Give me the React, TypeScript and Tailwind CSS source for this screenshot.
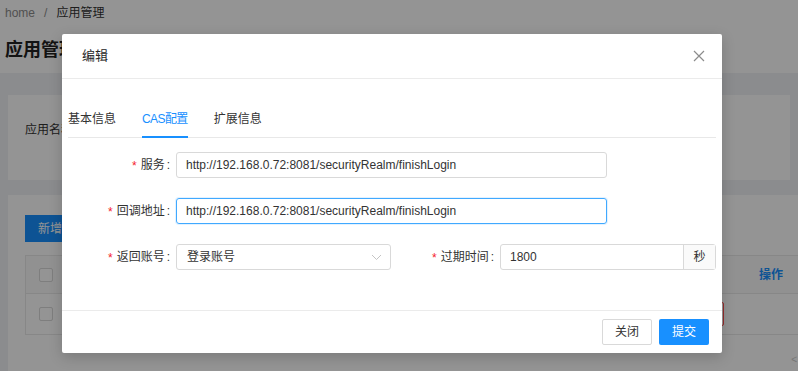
import React from 'react';

const font = "font-['Liberation_Sans','Noto_Sans_CJK_SC',sans-serif]";

const Label: React.FC<{ text: string; width: string }> = ({ text, width }) => (
  <div className={`${width} shrink-0 flex items-center justify-end pr-[6px] text-[12px] text-[#333]`}>
    <span className="text-[#f5222d] text-[12px] leading-none mt-[2px]">*</span>
    <span className="ml-[4px]">{text}</span>
    <span className="ml-[2px]">:</span>
  </div>
);

const CloseIcon = () => (
  <svg width="12" height="12" viewBox="0 0 12 12" fill="none" stroke="#8c8c8c" strokeWidth="1.2">
    <path d="M1 1 L11 11 M11 1 L1 11" />
  </svg>
);

const Chevron = () => (
  <svg width="11" height="7" viewBox="0 0 11 7" fill="none" stroke="#c4c4c4" strokeWidth="1">
    <path d="M1 1 L5.5 5.5 L10 1" />
  </svg>
);

export default function App() {
  const url = 'http://192.168.0.72:8081/securityRealm/finishLogin';

  return (
    <div className={`relative w-[798px] h-[371px] overflow-hidden bg-[#f0f2f5] ${font}`}>
      {/* page behind the mask */}
      <div className="bg-white h-[73px] px-[5px]">
        <div className="h-[25px] flex items-center text-[12px] text-[#8c8c8c]">
          <span>home</span>
          <span className="mx-[9px]">/</span>
          <span className="text-[#333]">应用管理</span>
        </div>
        <div className="mt-[13px] text-[18px] leading-[24px] font-bold text-[#222]">应用管理</div>
      </div>

      <div className="mx-[8px] mt-[22px] h-[85px] bg-white pt-[26px] pl-[17px]">
        <div className="text-[12px] leading-[18px] text-[#333]">应用名称</div>
      </div>

      <div className="ml-[8px] mr-[-30px] mt-[15px] h-[200px] bg-white pt-[20px] px-[17px]">
        <div className="w-[56px] h-[27px] bg-[#1890ff] text-white text-[12px] flex items-center pl-[13px]">新增</div>
        <div className="mt-[13px] border border-[#e8e8e8]">
          <div className="h-[38px] bg-[#fafafa] border-b border-[#e8e8e8] flex items-center">
            <div className="ml-[13px] w-[14px] h-[14px] border border-[#d9d9d9] bg-white rounded-[2px]" />
            <div className="ml-auto mr-[27px] text-[12px] font-bold text-[#1890ff]">操作</div>
          </div>
          <div className="h-[40px] flex items-center">
            <div className="ml-[13px] w-[14px] h-[14px] border border-[#d9d9d9] bg-white rounded-[2px]" />
            <div className="ml-[635px] w-[36px] h-[24px] border border-[#ff4d4f] rounded-[2px]" />
          </div>
        </div>
      </div>

      <div className="absolute right-[1px] top-[352px] text-[10px] text-[#ccc]">&lt;</div>

      {/* mask */}
      <div className="absolute inset-0 bg-black/[0.42]" />

      {/* modal */}
      <div className="absolute left-[62px] top-[34px] w-[660px] h-[319px] bg-white rounded-[2px] shadow-[0_4px_14px_rgba(0,0,0,0.18)] flex flex-col">
        <div className="h-[45px] shrink-0 border-b border-[#ebebeb] flex items-center justify-between pl-[20px] pr-[17px]">
          <span className="text-[13px] text-[#262626]">编辑</span>
          <CloseIcon />
        </div>

        <div className="mx-[6px] h-[59px] shrink-0 border-b border-[#e8e8e8] flex items-end gap-[26px] text-[12px]">
          <div className="leading-[18px] pb-[8px] text-[#333] -mb-px border-b-2 border-transparent">基本信息</div>
          <div className="leading-[18px] pb-[8px] text-[#1890ff] -mb-px border-b-2 border-[#1890ff] tracking-[-0.6px]">CAS配置</div>
          <div className="leading-[18px] pb-[8px] text-[#333] -mb-px border-b-2 border-transparent">扩展信息</div>
        </div>

        <div className="mt-[14px] flex flex-col gap-[20px] text-[12px] text-[#333]">
          <div className="flex h-[26px]">
            <Label text="服务" width="w-[114px]" />
            <div className="w-[431px] border border-[#d9d9d9] rounded-[3px] flex items-center pl-[9px]">{url}</div>
          </div>
          <div className="flex h-[26px]">
            <Label text="回调地址" width="w-[114px]" />
            <div className="w-[431px] border border-[#40a9ff] rounded-[3px] flex items-center pl-[9px] shadow-[0_0_0_1px_rgba(24,144,255,0.12)]">{url}</div>
          </div>
          <div className="flex h-[26px]">
            <Label text="返回账号" width="w-[114px]" />
            <div className="w-[215px] border border-[#d9d9d9] rounded-[3px] flex items-center justify-between pl-[10px] pr-[8px]">
              <span>登录账号</span>
              <Chevron />
            </div>
            <Label text="过期时间" width="w-[109px]" />
            <div className="w-[216px] flex border border-[#d9d9d9] rounded-[3px]">
              <div className="flex-1 flex items-center pl-[9px]">1800</div>
              <div className="w-[32px] border-l border-[#d9d9d9] bg-[#fafafa] flex items-center justify-center">秒</div>
            </div>
          </div>
        </div>

        <div className="mt-auto h-[43px] border-t border-[#ebebeb] flex items-center justify-end gap-[7px] pr-[13px] text-[12px]">
          <div className="w-[50px] h-[26px] border border-[#d9d9d9] rounded-[2px] flex items-center justify-center text-[#333]">关闭</div>
          <div className="w-[50px] h-[26px] bg-[#1890ff] rounded-[2px] flex items-center justify-center text-white">提交</div>
        </div>
      </div>
    </div>
  );
}
